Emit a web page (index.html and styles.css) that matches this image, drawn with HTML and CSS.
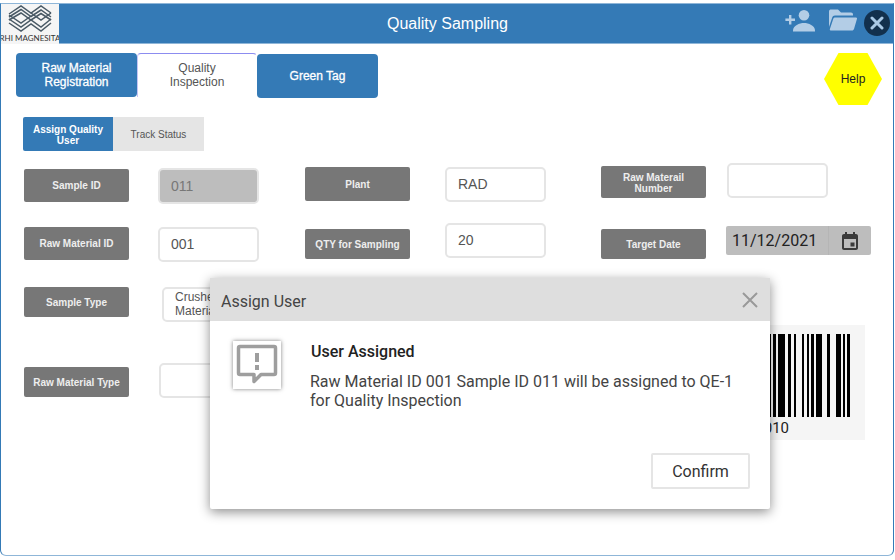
FILE: index.html
```html
<!DOCTYPE html>
<html lang="en">
<head>
    <meta charset="UTF-8">
    <meta name="viewport" content="width=device-width, initial-scale=1.0">
    <title>Quality Sampling</title>
    <link rel="stylesheet" href="styles.css">
</head>
<body>
    <div class="frame">
        <header class="top-bar">
            <div class="logo">
                <svg width="44" height="28" viewBox="0 0 44 28" fill="none" stroke="#4a5a66" stroke-width="1.5">
                    <path d="M1 9 L13 1 L23 8 L33 1 L43 8"/>
                    <path d="M1 12 L13 4.500 L23 11.500 L33 5 L43 12"/>
                    <path d="M1 15 L13 8 L23 15 L33 8.500 L43 15"/>
                    <path d="M1 10 L13 18 L23 11"/>
                    <path d="M1 14 L13 22 L23 15 L33 22 L43 14"/>
                    <path d="M1 18 L13 26 L23 19 L33 26 L43 18"/>
                    <path d="M23 8 L33 15 L43 8"/>
                </svg>
                <span class="logo-name">RHI MAGNESITA</span>
            </div>
            <h1 class="app-title">Quality Sampling</h1>
            <div class="top-icons">
                <svg class="add-user" width="32" height="24" viewBox="0 0 32 24" fill="#b3cde6">
                    <path d="M20 11.500a5.300 5.300 0 1 0 0-10.600 5.300 5.300 0 0 0 0 10.600z"/>
                    <path d="M9 21.500c0-5 6.500-7.600 11-7.600s11 2.600 11 7.600v1H9z"/>
                    <path d="M5 6h2.400v3.600H11V12H7.400v3.600H5V12H1.400V9.600H5z"/>
                </svg>
                <svg class="folder" width="29" height="24" viewBox="0 0 29 24" fill="#b3cde6">
                    <path d="M1 3.500C1 2.100 2 1.500 3 1.500h7l3 3h10c1.200 0 2 .8 2 2v1H7c-1.500 0-2.400.7-2.800 2L1 19z"/>
                    <path d="M7 9.500h21c.8 0 1.200.6 1 1.300l-3 10.200c-.3.900-1 1.500-2 1.500H3c-.9 0-1.400-.7-1.100-1.500L5.200 11c.3-1 1-1.500 1.800-1.500z"/>
                </svg>
                <div class="close-btn">
                    <svg width="14" height="14" viewBox="0 0 14 14" stroke="#a9c9e6" stroke-width="3" stroke-linecap="round"><path d="M2 2l10 10M12 2L2 12"/></svg>
                </div>
            </div>
        </header>

        <div class="tab-row">
            <div class="tabs">
                <div class="tab tab-blue">Raw Material<br>Registration</div>
                <div class="tab tab-active">Quality<br>Inspection</div>
                <div class="tab tab-blue tab-green">Green Tag</div>
            </div>
            <div class="help">Help</div>
        </div>

        <div class="sub-tabs">
            <div class="sub-tab sub-active">Assign Quality<br>User</div>
            <div class="sub-tab">Track Status</div>
        </div>

        <div class="form">
            <div class="form-col col-one">
                <div class="field">
                    <div class="label label-sample">Sample ID</div>
                    <input class="box box-grey" type="text" value="011">
                </div>
                <div class="field field-two">
                    <div class="label">Raw Material ID</div>
                    <input class="box" type="text" value="001">
                </div>
                <div class="field field-three">
                    <div class="label label-short">Sample Type</div>
                    <div class="box box-small">Crushed<br>Material</div>
                </div>
                <div class="field field-four">
                    <div class="label label-short">Raw Material Type</div>
                    <div class="box"></div>
                </div>
            </div>
            <div class="form-col col-two">
                <div class="field field-plant">
                    <div class="label">Plant</div>
                    <input class="box" type="text" value="RAD">
                </div>
                <div class="field field-qty">
                    <div class="label label-short">QTY for Sampling</div>
                    <input class="box" type="text" value="20">
                </div>
            </div>
            <div class="form-col col-three">
                <div class="field field-number">
                    <div class="label label-number">Raw Materail<br>Number</div>
                    <div class="box"></div>
                </div>
                <div class="field field-date">
                    <div class="label label-short">Target Date</div>
                    <div class="date-box">
                        <span class="date-text">11/12/2021</span>
                        <span class="date-btn">
                            <svg width="18" height="20" viewBox="0 0 18 20" fill="#3a3a3a">
                                <path d="M4 1h2v2h6V1h2v2h1c1.100 0 2 .9 2 2v12c0 1.100-.9 2-2 2H3c-1.100 0-2-.9-2-2V5c0-1.100.9-2 2-2h1zM3 8v9h12V8z"/>
                                <rect x="9.500" y="11.500" width="4" height="4"/>
                            </svg>
                        </span>
                    </div>
                </div>
                <div class="barcode">
                    <svg width="165" height="92" viewBox="0 0 165 92" fill="#000">
                        <rect x="70" y="9" width="1" height="83"/>
                        <rect x="73" y="9" width="3" height="83"/>
                        <rect x="78" y="9" width="7" height="83"/>
                        <rect x="88" y="9" width="3" height="83"/>
                        <rect x="94" y="9" width="2" height="83"/>
                        <rect x="102" y="9" width="2" height="83"/>
                        <rect x="107" y="9" width="2" height="83"/>
                        <rect x="111" y="9" width="3" height="83"/>
                        <rect x="116" y="9" width="6" height="83"/>
                        <rect x="127" y="9" width="3" height="83"/>
                        <rect x="136" y="9" width="5" height="83"/>
                        <rect x="143" y="9" width="2" height="83"/>
                        <rect x="147" y="9" width="3" height="83"/>
                    </svg>
                    <div class="barcode-num">0010</div>
                </div>
            </div>
        </div>

        <div class="modal">
            <div class="modal-head">
                <span>Assign User</span>
                <svg width="16" height="16" viewBox="0 0 16 16" stroke="#999" stroke-width="2"><path d="M1 1l14 14M15 1L1 15"/></svg>
            </div>
            <div class="modal-body">
                <div class="alert-icon">
                    <svg width="42" height="42" viewBox="0 0 42 42" fill="none" stroke="#9e9e9e" stroke-width="3.500">
                        <path d="M4 2.500h34c1 0 1.500.6 1.500 1.500v25c0 1-.5 1.500-1.500 1.500H25l-7 7v-7H4c-1 0-1.500-.5-1.500-1.500V4c0-.9.5-1.500 1.500-1.500z" stroke-linejoin="round"/>
                        <path d="M21 9v9M21 21v5" stroke-width="4"/>
                    </svg>
                </div>
                <div class="modal-text">
                    <h3>User Assigned</h3>
                    <p>Raw Material ID 001 Sample ID 011 will be assigned to QE-1<br>for Quality Inspection</p>
                </div>
            </div>
            <div class="modal-foot">
                <button class="confirm" type="button">Confirm</button>
            </div>
        </div>
    </div>
</body>
</html>
```

FILE: styles.css
```css
* {
    box-sizing: border-box;
}

html, body {
    height: 100%;
}

body {
    margin: 0;
    background-color: #fff;
    font-family: "Liberation Sans", Arial, sans-serif;
    overflow: hidden;
}

.frame {
    position: relative;
    width: 894px;
    height: 553px;
    margin-top: 3px;
    border: 1px solid #347ab6;
    border-top-color: #8fb6d8;
    border-bottom-color: #8fb6d8;
    border-radius: 0 0 6px 6px;
}

.top-bar {
    display: flex;
    align-items: center;
    height: 40px;
    background-color: #347ab6;
    border-bottom: 1px solid #8fb6d8;
}

.logo {
    display: flex;
    flex-direction: column;
    align-items: center;
    flex: none;
    width: 58px;
    height: 40px;
    padding-top: 1px;
    background-color: #f5f5f5;
    overflow: hidden;
}

.logo-name {
    margin-top: 1px;
    font-family: Lato, sans-serif;
    font-size: 8px;
    line-height: 9px;
    color: #333;
    white-space: nowrap;
}

.app-title {
    flex: 1;
    margin: 0;
    padding-left: 54px;
    font-size: 16px;
    font-weight: normal;
    text-align: center;
    color: #fff;
}

.top-icons {
    display: flex;
    align-items: center;
    flex: none;
    width: 111px;
    padding-left: 2px;
}

.add-user {
    margin-right: 12px;
    margin-top: -5px;
}

.folder {
    margin-right: 7px;
    margin-top: -7px;
}

.close-btn {
    display: flex;
    align-items: center;
    justify-content: center;
    width: 26px;
    height: 26px;
    margin-top: -2px;
    border-radius: 50%;
    background-color: #12304d;
}

.tab-row {
    display: flex;
    justify-content: space-between;
    padding: 9px 0 0 15px;
}

.tabs {
    display: flex;
    align-items: flex-start;
}

.tab {
    display: flex;
    align-items: center;
    justify-content: center;
    width: 121px;
    height: 44px;
    font-size: 12px;
    line-height: 14px;
    text-align: center;
}

.tab-blue {
    background-color: #347ab6;
    color: #fff;
    border-radius: 4px;
    -webkit-text-stroke: 0.3px #fff;
}

.tab-active {
    width: 120px;
    padding-bottom: 1px;
    background-color: #fff;
    color: #555;
    border-top: 1px solid #8c8cf0;
    border-left: 1px solid #c4c4f5;
    border-right: 1px solid transparent;
    border-radius: 4px 4px 0 0;
}

.tab-green {
    margin-top: 1px;
}

.help {
    display: flex;
    align-items: center;
    justify-content: center;
    width: 58px;
    height: 52px;
    margin: 0 11px 0 0;
    background-color: #ff0;
    clip-path: polygon(25% 0, 75% 0, 100% 50%, 75% 100%, 25% 100%, 0 50%);
    font-size: 12px;
    color: #222;
}

.sub-tabs {
    display: flex;
    margin: 12px 0 0 22px;
}

.sub-tab {
    display: flex;
    align-items: center;
    justify-content: center;
    width: 91px;
    height: 34px;
    padding-top: 1px;
    background-color: #e5e5e5;
    font-size: 10px;
    line-height: 11px;
    text-align: center;
    color: #555;
}

.sub-active {
    width: 90px;
    background-color: #347ab6;
    color: #fff;
    font-weight: bold;
    border-radius: 2px 0 0 2px;
}

.form {
    display: flex;
    padding: 17px 0 0 23px;
}

.form-col {
    display: flex;
    flex-direction: column;
}

.col-one {
    width: 281px;
}

.col-two {
    width: 296px;
}

.col-three {
    width: 270px;
}

.field {
    display: flex;
    align-items: flex-start;
    gap: 29px;
}

.label {
    display: flex;
    align-items: center;
    justify-content: center;
    flex: none;
    width: 105px;
    height: 33px;
    background-color: #777;
    border-radius: 2px;
    font-size: 10px;
    line-height: 11px;
    font-weight: bold;
    text-align: center;
    color: #eee;
}

.label-short {
    height: 30px;
}

.label-sample {
    margin-top: 1px;
}

.box {
    display: block;
    width: 101px;
    height: 35px;
    padding: 0 11px 2px;
    background-color: #fff;
    border: 2px solid #e5e5e5;
    border-radius: 5px;
    font-family: "Liberation Sans", Arial, sans-serif;
    font-size: 14px;
    color: #555;
    outline: none;
}

.box-grey {
    height: 36px;
    padding-bottom: 0;
    background-color: #bdbdbd;
    color: #777;
}

.field-two {
    margin-top: 23px;
}

.field-three {
    margin-top: 25px;
    gap: 33px;
}

.box-small {
    width: 100px;
    padding: 1px 11px 0;
    font-size: 12px;
    line-height: 14px;
}

.field-four {
    margin-top: 41px;
    gap: 30px;
}

.field-four .label {
    margin-top: 4px;
}

.col-two .field {
    gap: 35px;
}

.field-plant {
    margin-top: -1px;
}

.field-plant .label {
    height: 34px;
}

.field-qty {
    margin-top: 21px;
}

.field-qty .label {
    margin-top: 6px;
}

.col-three .field {
    gap: 21px;
}

.field-number {
    margin-top: -5px;
}

.label-number {
    height: 32px;
    margin-top: 3px;
    padding-top: 1px;
}

.field-date {
    margin-top: 28px;
}

.field-date .label {
    margin-top: 3px;
}

.date-box {
    display: flex;
    align-items: center;
    justify-content: space-between;
    width: 145px;
    height: 29px;
    margin-left: -1px;
    padding-left: 6px;
    background-color: #bdbdbd;
    border-radius: 2px;
    font-family: Roboto, sans-serif;
    font-size: 16px;
    color: #222;
}

.date-btn {
    display: flex;
    align-items: center;
    justify-content: center;
    width: 43px;
    height: 29px;
    border-left: 1px solid #b5b5b5;
}

.barcode {
    width: 165px;
    height: 115px;
    margin: 66px 0 0 99px;
    background-color: #f5f5f5;
}

.barcode svg {
    display: block;
}

.barcode-num {
    width: 89px;
    font-family: Roboto, sans-serif;
    font-size: 15px;
    line-height: 23px;
    text-align: right;
    color: #222;
}

/* popup sits over the form */
.modal {
    position: absolute;
    left: 209px;
    top: 274px;
    display: flex;
    flex-direction: column;
    width: 560px;
    height: 231px;
    background-color: #fff;
    border-radius: 2px;
    box-shadow: 0 3px 12px rgba(0, 0, 0, 0.45);
    font-family: Roboto, sans-serif;
}

.modal-head {
    display: flex;
    align-items: center;
    justify-content: space-between;
    height: 43px;
    padding: 4px 12px 0 11px;
    background-color: #dedede;
    font-size: 16px;
    color: #444;
}

.modal-head svg {
    margin-top: -4px;
}

.modal-body {
    display: flex;
    padding: 20px 0 0 23px;
}

.alert-icon {
    display: flex;
    align-items: center;
    justify-content: center;
    width: 48px;
    height: 48px;
    background-color: #fff;
    box-shadow: 0 0 4px rgba(0, 0, 0, 0.5);
}

.modal-text {
    padding: 2px 0 0 29px;
}

.modal-text h3 {
    margin: 0 0 11px;
    padding-left: 1px;
    font-size: 16px;
    line-height: 18px;
    font-weight: 500;
    color: #222;
}

.modal-text p {
    margin: 0;
    font-size: 16px;
    line-height: 19px;
    color: #444;
}

.modal-foot {
    display: flex;
    justify-content: flex-end;
    margin-top: auto;
    padding: 0 20px 20px 0;
}

.confirm {
    width: 99px;
    height: 36px;
    background-color: #fff;
    border: 2px solid #e5e5e5;
    border-radius: 2px;
    font-family: Roboto, sans-serif;
    font-size: 16px;
    color: #333;
}
```
